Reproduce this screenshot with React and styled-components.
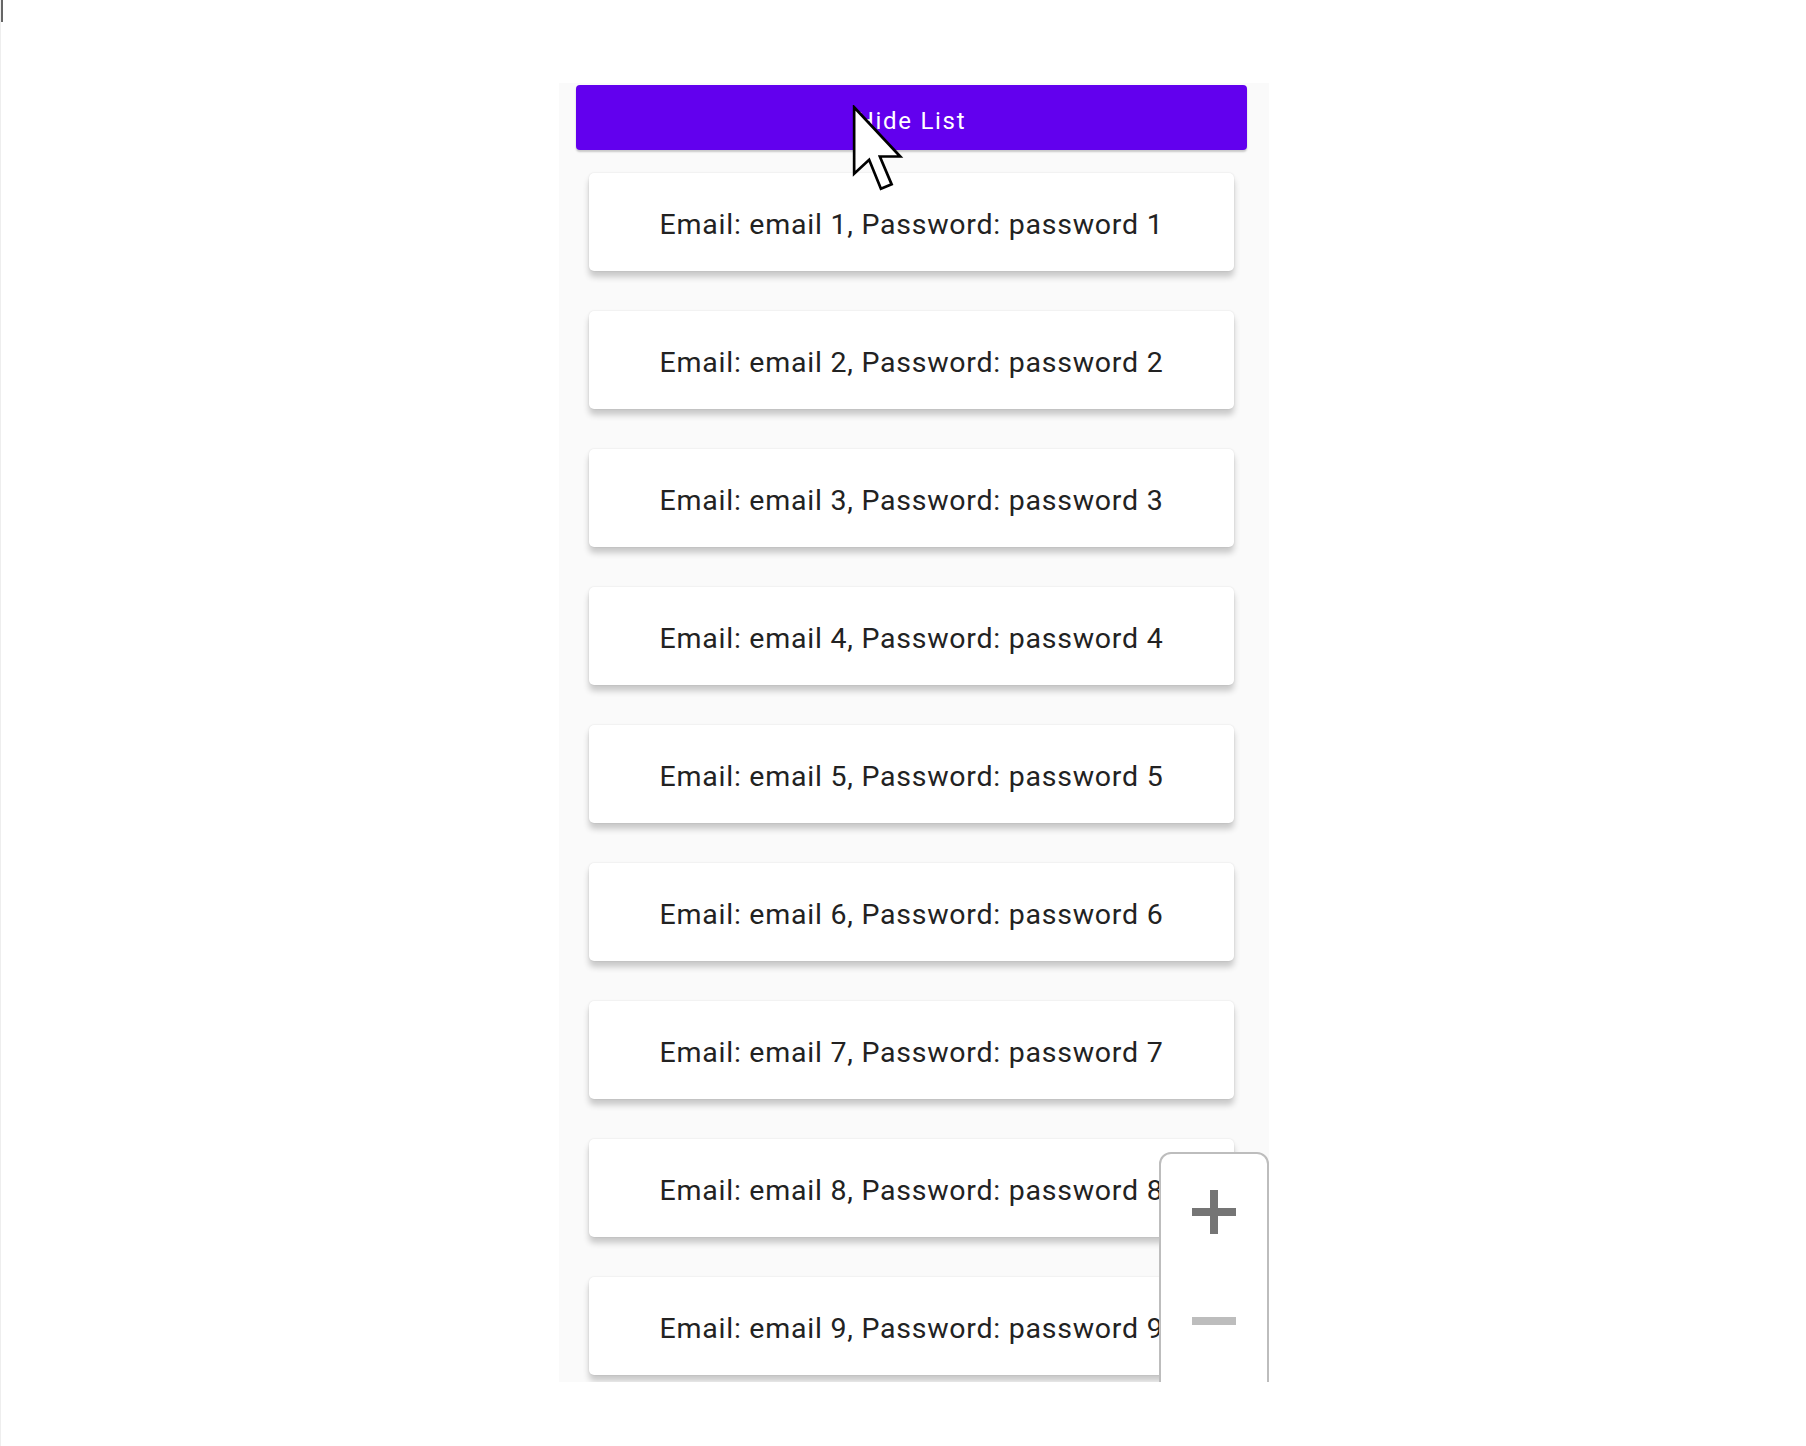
import React from "react";
import styled, { createGlobalStyle } from "styled-components";

const GlobalStyle = createGlobalStyle`
  html, body {
    margin: 0;
    padding: 0;
    background: #fff;
    font-family: Roboto, "Liberation Sans", sans-serif;
  }
`;

const Page = styled.div`
  position: relative;
  width: 1806px;
  height: 1446px;
  background: #fff;
  overflow: hidden;
  border-left: 1px solid #eee;
  box-sizing: border-box;
`;

const Edge = styled.div`
  position: absolute;
  left: 0;
  top: 0;
  width: 2px;
  height: 22px;
  background: #666;
`;

const Panel = styled.div`
  position: relative;
  margin: 83px 0 0 558px;
  width: 710px;
  height: 1299px;
  background: #fafafa;
  overflow: hidden;
  padding: 2px 22px 0 17px;
  box-sizing: border-box;
`;

const ToggleButton = styled.button`
  display: flex;
  align-items: center;
  justify-content: center;
  width: 100%;
  height: 65px;
  padding: 6px 0 0;
  border: none;
  border-radius: 4px;
  background: #6200ee;
  color: #fff;
  font-family: Roboto, "Liberation Sans", sans-serif;
  font-size: 24px;
  letter-spacing: 1.7px;
  box-shadow: 0 2px 2px rgba(0, 0, 0, 0.2);
  cursor: pointer;
`;

const List = styled.div`
  display: flex;
  flex-direction: column;
  gap: 40px;
  margin-top: 23px;
  padding: 0 13px;
`;

const Card = styled.div`
  display: flex;
  align-items: center;
  justify-content: center;
  height: 98px;
  padding-top: 4px;
  box-sizing: border-box;
  flex-shrink: 0;
  background: #fff;
  border-radius: 5px;
  box-shadow: 0 6px 6px rgba(0, 0, 0, 0.2), 0 0 2px rgba(0, 0, 0, 0.12);
  color: #222;
  font-size: 28.5px;
  letter-spacing: 0.75px;
`;

const ZoomControl = styled.div`
  position: absolute;
  left: 600px;
  top: 1069px;
  width: 110px;
  height: 260px;
  background: #fff;
  border: 2px solid #bdbdbd;
  border-radius: 12px;
  box-sizing: border-box;
  display: flex;
  flex-direction: column;
  align-items: center;
  padding-top: 36px;
  gap: 82px;
`;

const Cursor = styled.svg`
  position: absolute;
  left: 851px;
  top: 105px;
`;

const items = Array.from({ length: 10 }, (_, i) => i + 1);

function App() {
  return (
    <Page>
      <GlobalStyle />
      <Edge />
      <Panel>
        <ToggleButton>Hide List</ToggleButton>
        <List>
          {items.map((n) => (
            <Card key={n}>
              Email: email {n}, Password: password {n}
            </Card>
          ))}
        </List>
        <ZoomControl>
          <svg width="44" height="44" viewBox="0 0 44 44">
            <rect x="18" y="0" width="8" height="44" fill="#757575" />
            <rect x="0" y="18" width="44" height="8" fill="#757575" />
          </svg>
          <svg width="44" height="10" viewBox="0 0 44 10">
            <rect x="0" y="1" width="44" height="8" fill="#bdbdbd" />
          </svg>
        </ZoomControl>
      </Panel>
      <Cursor width="60" height="88" viewBox="0 0 56 82">
        <path
          d="M2 2 L2 64 L16 51 L27 78 L37 74 L26 48 L45 48 Z"
          fill="#fff"
          stroke="#000"
          strokeWidth="2.5"
          strokeLinejoin="miter"
        />
      </Cursor>
    </Page>
  );
}

export default App;
